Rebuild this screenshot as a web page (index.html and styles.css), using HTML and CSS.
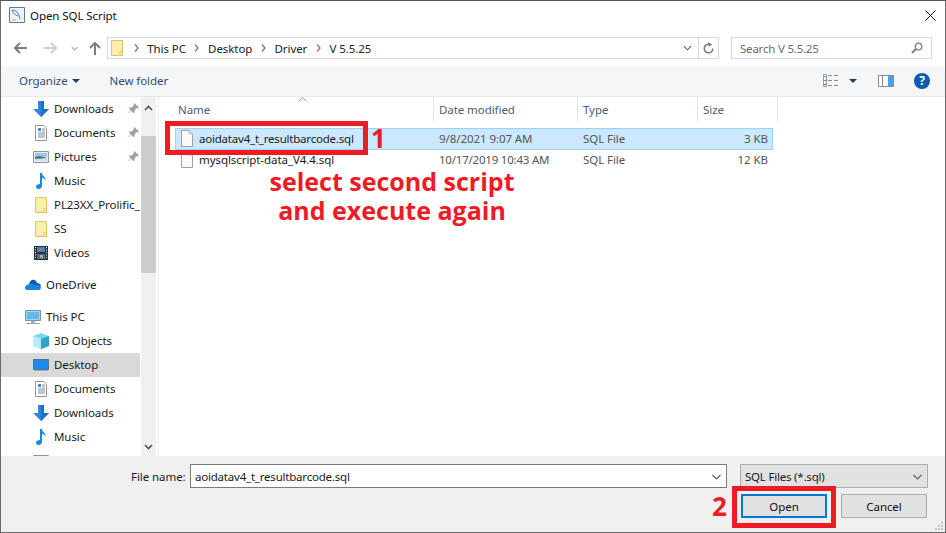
FILE: index.html
```html
<!DOCTYPE html>
<html lang="en">
<head>
<meta charset="utf-8">
<title>Open SQL Script</title>
<link rel="stylesheet" href="styles.css">
</head>
<body>
<svg class="defs" aria-hidden="true">
  <symbol id="i-folder" viewBox="0 0 16 16"><path d="M2.500.500h11v15h-11z" fill="#fde58f" stroke="#e6c25a"/><path d="M3 1h10v14H3z" fill="#ffeeb0"/><path d="M11 11.500h2.500v4H11z" fill="#fff3c4" stroke="#e6c25a"/></symbol>
  <symbol id="i-down" viewBox="0 0 16 16"><path d="M5 0h6v8h5l-8 8-8-8h5z" fill="#2f86e0"/><path d="M8 0h3v8h5l-8 8z" fill="#1c6fc9"/></symbol>
  <symbol id="i-docs" viewBox="0 0 16 16"><path d="M3 .5h8l2.500 2.500v12.500H2.500V.5z" fill="#fff" stroke="#8d9aa6"/><path d="M5 3h3v3H5z" fill="#3a8ede"/><path d="M9 4h3M9 6h3M5 8h7M5 10h7M5 12h7" stroke="#7c8a96"/></symbol>
  <symbol id="i-pics" viewBox="0 0 16 16"><path d="M.5 2.500h15v11H.5z" fill="#e4edf4" stroke="#8f979e"/><path d="M2 4h12v4H2z" fill="#9fc6e4"/><path d="M2 8l5-1 7 2v3H2z" fill="#4f7183"/><path d="M2 10l12-1v3H2z" fill="#cfe0ea"/></symbol>
  <symbol id="i-music" viewBox="0 0 16 16"><path d="M7 0h2c0 3 4 3.500 3.500 7.500C11.500 5.500 10 5 9 5v8c0 2-1.500 3-3.500 3S3 15 3 13.500 4.500 11 7 11z" fill="#1a86e8"/></symbol>
  <symbol id="i-video" viewBox="0 0 16 16"><path d="M1 1h14v14H1z" fill="#2b2f36"/><path d="M4 2h8v5H4z" fill="#3b82c4"/><path d="M4 9h8v5H4z" fill="#3671b6"/><path d="M6 3h3v3H6z" fill="#d9622c"/><path d="M7 10h3v3H7z" fill="#e0a030"/><path d="M2 2.500h1M2 5h1M2 7.500h1M2 10h1M2 12.500h1M13 2.500h1M13 5h1M13 7.500h1M13 10h1M13 12.500h1" stroke="#fff"/></symbol>
  <symbol id="i-cloud" viewBox="0 0 16 12"><path d="M4 5c.5-3 3-5 5.500-4 1.500.5 2 1.500 2.500 3 2 0 3.500 1 4 3H8z" fill="#0a5cb8"/><path d="M0 9c0-2 1.500-3.500 3.500-3.500C5 4 8 4 9 6c3-.5 6 0 7 2 0 2-1 3-2 3H2C1 11 0 10 0 9z" fill="#1c84dc"/></symbol>
  <symbol id="i-pc" viewBox="0 0 16 16"><path d="M.5 1.500h15v10H.5z" fill="#9fd4f6" stroke="#7f8f9c"/><path d="M2 3h12v7H2z" fill="#63b9ef"/><path d="M6 12h4v2H6z" fill="#a8b2ba"/><path d="M1 14.500h14" stroke="#9aa4ac"/></symbol>
  <symbol id="i-3d" viewBox="0 0 16 16"><path d="M8 0l8 3v10l-8 3-8-3V3z" fill="#7fd8ee"/><path d="M8 6l8-3v10l-8 3z" fill="#2da3c9"/><path d="M0 3l8 3v10l-8-3z" fill="#bdeaf5"/></symbol>
  <symbol id="i-desk" viewBox="0 0 16 16"><path d="M.5 2.500h15v10H.5z" fill="#1a8cf0" stroke="#5a6e80"/><path d="M1 13h14v1H1z" fill="#8fb8d8"/></symbol>
  <symbol id="i-pin" viewBox="0 0 12 12"><path d="M7 0l5 5-1.500 1-1-.5L7 8l.5 2L6 11 3.500 8.500 1 11l-.5-.5L3 8 1 6l1-1.500 2 .5 2.500-2.500L6 1.500z" fill="#9da0a3"/></symbol>
  <symbol id="i-file" viewBox="0 0 12 17"><path d="M.5.500h7.500l3.500 3.500v12.500H.5z" fill="#fafafa" stroke="#a0a0a0"/><path d="M8 .5V4h3.500" fill="none" stroke="#c0c0c0"/></symbol>
  <symbol id="i-chev" viewBox="0 0 10 6"><path d="M1 1l4 4 4-4" fill="none" stroke="#5f5f5f" stroke-width="1.200"/></symbol>
  <symbol id="i-crumb" viewBox="0 0 5 8"><path d="M1 .5L4 4 1 7.500" fill="none" stroke="#7a7a7a" stroke-width="1.300"/></symbol>
</svg>

<main class="window">
  <header class="titlebar">
    <svg class="app-icon" width="16" height="16" viewBox="0 0 16 16"><path d="M.5.500h15v15H.5z" fill="#eef3f7" stroke="#5d7c95"/><path d="M3 3c4 0 7 3 8 9M3 3c1 3 3 5 6 6" fill="none" stroke="#4f7f9f"/><path d="M3 13h4" stroke="#d9a441"/></svg>
    <span class="title">Open SQL Script</span>
    <svg class="close" width="11" height="11" viewBox="0 0 11 11"><path d="M.5.500l10 10M10.500.500l-10 10" stroke="#111" fill="none"/></svg>
  </header>

  <nav class="addressrow">
    <svg class="nav-back" width="13" height="12" viewBox="0 0 13 12"><path d="M6 1L1 6l5 5M1 6h12" fill="none" stroke="#7d7d7d" stroke-width="2"/></svg>
    <svg class="nav-fwd" width="13" height="12" viewBox="0 0 13 12"><path d="M7 1l5 5-5 5M12 6H0" fill="none" stroke="#cfcfcf" stroke-width="2"/></svg>
    <svg class="nav-more" width="7" height="5"><use href="#i-chev"/></svg>
    <svg class="nav-up" width="12" height="13" viewBox="0 0 12 13"><path d="M1 6l5-5 5 5M6 1v12" fill="none" stroke="#7d7d7d" stroke-width="2"/></svg>
    <div class="addressbox">
      <svg width="16" height="16"><use href="#i-folder"/></svg>
      <svg class="crumb-sep" width="5" height="8"><use href="#i-crumb"/></svg>
      <span>This PC</span>
      <svg class="crumb-sep" width="5" height="8"><use href="#i-crumb"/></svg>
      <span>Desktop</span>
      <svg class="crumb-sep" width="5" height="8"><use href="#i-crumb"/></svg>
      <span>Driver</span>
      <svg class="crumb-sep" width="5" height="8"><use href="#i-crumb"/></svg>
      <span>V 5.5.25</span>
      <svg class="addr-chev" width="9" height="6"><use href="#i-chev"/></svg>
      <span class="addr-refresh">
        <svg width="11" height="12" viewBox="0 0 11 12"><path d="M7 2.500A4.300 4.300 0 1 0 9.800 6.500" fill="none" stroke="#7a7a7a" stroke-width="1.500"/><path d="M5 0l4 2.500L6 5z" fill="#7a7a7a"/></svg>
      </span>
    </div>
    <div class="searchbox">
      <span class="tight">Search V 5.5.25</span>
      <svg width="12" height="12" viewBox="0 0 12 12"><circle cx="7.500" cy="4.500" r="3.300" fill="none" stroke="#7d7d7d" stroke-width="1.300"/><path d="M5 7l-4 4" stroke="#7d7d7d" stroke-width="2"/></svg>
    </div>
  </nav>

  <div class="toolbar">
    <span class="tool">Organize</span>
    <span class="caret organize-caret"></span>
    <span class="tool newfolder">New folder</span>
    <svg class="view-icon" width="16" height="13" viewBox="0 0 16 13"><path d="M.5.500h3v12h-3z" fill="#fff" stroke="#9a9a9a"/><path d="M1 2.500h2" stroke="#5d8fc0"/><path d="M1 6.500h2" stroke="#5d8fc0"/><path d="M1 10.500h2" stroke="#c9433c"/><path d="M5 1.500h4M11 1.500h4M5 6.500h4M11 6.500h4M5 11.500h4M11 11.500h4" stroke="#8a8a8a"/></svg>
    <span class="caret view-caret"></span>
    <svg class="pane-icon" width="16" height="12" viewBox="0 0 16 12"><path d="M.5.500h15v11H.5z" fill="#fff" stroke="#7f8a93"/><path d="M10 1h5v10h-5z" fill="#4e9be6"/><path d="M4.500 1v10" stroke="#7f8a93"/></svg>
    <span class="help">?</span>
  </div>

  <div class="body">
    <aside class="sidebar">
      <ul class="tree">
        <li class="node"><svg class="ico" width="16" height="16"><use href="#i-down"/></svg><span class="label">Downloads</span><svg class="pin" width="11" height="11"><use href="#i-pin"/></svg></li>
        <li class="node"><svg class="ico" width="16" height="16"><use href="#i-docs"/></svg><span class="label">Documents</span><svg class="pin" width="11" height="11"><use href="#i-pin"/></svg></li>
        <li class="node"><svg class="ico" width="16" height="16"><use href="#i-pics"/></svg><span class="label">Pictures</span><svg class="pin" width="11" height="11"><use href="#i-pin"/></svg></li>
        <li class="node"><svg class="ico" width="16" height="16"><use href="#i-music"/></svg><span class="label">Music</span></li>
        <li class="node"><svg class="ico" width="16" height="16"><use href="#i-folder"/></svg><span class="label">PL23XX_Prolific_</span></li>
        <li class="node"><svg class="ico" width="16" height="16"><use href="#i-folder"/></svg><span class="label">SS</span></li>
        <li class="node"><svg class="ico" width="16" height="16"><use href="#i-video"/></svg><span class="label">Videos</span></li>
        <li class="node root group"><svg class="ico" width="16" height="12"><use href="#i-cloud"/></svg><span class="label">OneDrive</span></li>
        <li class="node root group"><svg class="ico" width="16" height="16"><use href="#i-pc"/></svg><span class="label">This PC</span></li>
        <li class="node"><svg class="ico" width="16" height="16"><use href="#i-3d"/></svg><span class="label">3D Objects</span></li>
        <li class="node current"><svg class="ico" width="16" height="16"><use href="#i-desk"/></svg><span class="label">Desktop</span></li>
        <li class="node"><svg class="ico" width="16" height="16"><use href="#i-docs"/></svg><span class="label">Documents</span></li>
        <li class="node"><svg class="ico" width="16" height="16"><use href="#i-down"/></svg><span class="label">Downloads</span></li>
        <li class="node"><svg class="ico" width="16" height="16"><use href="#i-music"/></svg><span class="label">Music</span></li>
        <li class="node"><svg class="ico" width="16" height="16"><use href="#i-pics"/></svg></li>
      </ul>
    </aside>
    <div class="scrollbar">
      <svg class="scroll-up" width="9" height="6" viewBox="0 0 9 6"><path d="M1 5l3.500-3.500L8 5" fill="none" stroke="#505050" stroke-width="1.600"/></svg>
      <div class="thumb"></div>
      <svg class="scroll-down" width="9" height="6" viewBox="0 0 9 6"><path d="M1 1l3.500 3.500L8 1" fill="none" stroke="#505050" stroke-width="1.600"/></svg>
    </div>
    <section class="files">
      <div class="columns">
        <div class="col col-name">Name</div>
        <div class="col col-date">Date modified</div>
        <div class="col col-type">Type</div>
        <div class="col col-size">Size</div>
        <svg class="sort" width="9" height="5" viewBox="0 0 9 5"><path d="M.5 4.500l4-4 4 4" fill="none" stroke="#9a9a9a"/></svg>
      </div>
      <div class="row selected">
        <div class="cell-name"><svg width="12" height="17"><use href="#i-file"/></svg><span class="tight">aoidatav4_t_resultbarcode.sql</span></div>
        <div class="cell-date">9/8/2021 9:07 AM</div>
        <div class="cell-type">SQL File</div>
        <div class="cell-size">3 KB</div>
      </div>
      <div class="row second">
        <div class="cell-name"><svg width="12" height="17"><use href="#i-file"/></svg><span>mysqlscript-data_V4.4.sql</span></div>
        <div class="cell-date tight">10/17/2019 10:43 AM</div>
        <div class="cell-type">SQL File</div>
        <div class="cell-size">12 KB</div>
      </div>
    </section>
  </div>

  <footer class="footer">
    <div class="footer-row">
      <span class="fname-label">File name:</span>
      <div class="fname-input"><span class="tight">aoidatav4_t_resultbarcode.sql</span><svg width="11" height="6"><use href="#i-chev"/></svg></div>
      <div class="filter"><span class="tight">SQL Files (*.sql)</span><svg width="11" height="6"><use href="#i-chev"/></svg></div>
    </div>
    <div class="footer-buttons">
      <button class="btn btn-primary" type="button">Open</button>
      <button class="btn" type="button">Cancel</button>
    </div>
    <svg class="grip" width="10" height="10" viewBox="0 0 10 10"><path d="M7 1h2v2H7zM4 4h2v2H4zM7 4h2v2H7zM1 7h2v2H1zM4 7h2v2H4zM7 7h2v2H7z" fill="#c4c4c4"/></svg>
  </footer>
</main>

<div class="mark mark-file"></div>
<div class="mark-num num-1">1</div>
<div class="note">select second script<br>and execute again</div>
<div class="mark mark-open"></div>
<div class="mark-num num-2">2</div>
</body>
</html>
```

FILE: styles.css
```css
* { box-sizing: border-box; }
html, body { margin: 0; padding: 0; }
body {
  width: 946px;
  height: 533px;
  overflow: hidden;
  position: relative;
  background: #fff;
  font-family: "Noto Sans", "Open Sans", sans-serif;
  font-size: 11.5px;
  letter-spacing: -0.07px;
  color: #1a1a1a;
}
.defs { display: none; }
svg { display: block; flex: none; }
.tight { letter-spacing: -0.21px; }

.window {
  width: 946px;
  height: 533px;
  display: flex;
  flex-direction: column;
  border: 1px solid #6b6b6b;
  border-top-color: #555;
  background: #fff;
}

.titlebar {
  height: 29px;
  flex: none;
  display: flex;
  align-items: center;
  padding: 0 9px 1px 8px;
}
.title { margin-left: 5px; color: #111; }
.close { margin-left: auto; }

.addressrow {
  height: 36px;
  flex: none;
  display: flex;
  align-items: flex-start;
  padding-top: 7px;
}
.nav-back { margin: 5px 0 0 13px; }
.nav-fwd { margin: 5px 0 0 17px; }
.nav-more { margin: 9px 0 0 14px; }
.nav-up { margin: 5px 0 0 11px; }
.addressbox, .searchbox {
  height: 22px;
  display: flex;
  align-items: center;
  border: 1px solid #d9d9d9;
  background: #fff;
}
.addressbox {
  width: 612px;
  margin-left: 6px;
  padding-left: 1px;
  gap: 8.6px;
  color: #222;
}
.addr-chev { margin-left: auto; }
.addr-refresh {
  width: 20px;
  height: 20px;
  margin-left: -3px;
  border-left: 1px solid #d9d9d9;
  display: flex;
  align-items: center;
  justify-content: center;
}
.searchbox {
  width: 201px;
  margin-left: 12px;
  padding: 0 8px;
  justify-content: space-between;
  color: #6d6d6d;
}

.toolbar {
  height: 31px;
  flex: none;
  display: flex;
  align-items: center;
  background: #f5f6f7;
  border-bottom: 1px solid #e8e8e8;
  padding-bottom: 1px;
}
.tool { color: #2f4f78; }
.toolbar > .tool:first-child { margin-left: 18px; }
.caret {
  width: 0;
  height: 0;
  border-left: 4px solid transparent;
  border-right: 4px solid transparent;
  border-top: 4px solid #1f3d66;
}
.organize-caret { margin-left: 4px; }
.newfolder { margin-left: 30px; }
.view-icon { margin-left: auto; }
.view-caret { margin-left: 10px; }
.pane-icon { margin-left: 21px; }
.help {
  width: 16px;
  height: 16px;
  margin: 0 15px 0 20px;
  border-radius: 50%;
  background: #0a5cad;
  color: #fff;
  font-weight: 700;
  font-size: 12px;
  line-height: 16px;
  text-align: center;
}

.body {
  flex: 1;
  min-height: 0;
  display: flex;
}
.sidebar {
  width: 139px;
  flex: none;
  overflow: hidden;
}
.tree { list-style: none; margin: 0; padding: 0; }
.node {
  height: 24px;
  display: flex;
  align-items: center;
  padding-left: 32px;
  padding-bottom: 1px;
  white-space: nowrap;
  color: #1a1a1a;
  position: relative;
}
.node .label { margin-left: 5px; }
.node.root { padding-left: 24px; }
.node.group { margin-top: 8px; }
.node.current { background: #d9d9d9; }
.pin { position: absolute; left: 127px; top: 6px; }

.scrollbar {
  width: 15px;
  margin-left: 1px;
  flex: none;
  background: #f0f0f0;
  display: flex;
  flex-direction: column;
  align-items: center;
}
.scroll-up { margin-top: 8px; }
.thumb { width: 100%; height: 137px; margin-top: 25px; background: #cdcdcd; }
.scroll-down { margin-top: auto; margin-bottom: 6px; }

.files {
  flex: 1;
  min-width: 0;
  margin-left: 2px;
  border-left: 1px solid #f0f0f0;
  padding-left: 16px;
}
.columns {
  height: 25px;
  display: flex;
  position: relative;
  color: #4c607a;
}
.col {
  height: 25px;
  line-height: 26px;
  padding-left: 5px;
  border-right: 1px solid #e5e5e5;
}
.col-name { width: 259px; padding-left: 3px; }
.col-date { width: 144px; }
.col-type { width: 120px; }
.col-size { width: 80px; }
.sort { position: absolute; left: 123px; top: 0; }

.row {
  width: 598px;
  display: flex;
  align-items: center;
  border: 1px solid transparent;
  color: #555;
}
.selected {
  margin-top: 6px;
  height: 22px;
  background: #cce8ff;
  border-color: #99d1ff;
  padding-bottom: 1px;
}
.second { height: 20px; padding-bottom: 1px; }
.cell-name {
  width: 257px;
  display: flex;
  align-items: center;
  gap: 6px;
  padding-left: 5px;
  color: #1a1a1a;
}
.cell-date { width: 144px; padding-left: 6px; }
.cell-type { width: 120px; padding-left: 6px; }
.cell-size { width: 75px; text-align: right; padding-right: 4px; }

.footer {
  height: 76px;
  flex: none;
  background: #f0f0f0;
  position: relative;
}
.footer-row {
  display: flex;
  align-items: center;
  padding: 8px 0 0 130px;
}
.fname-label { width: 59px; color: #1a1a1a; }
.fname-input, .filter {
  height: 24px;
  display: flex;
  align-items: center;
  justify-content: space-between;
  padding: 1px 4px 0;
}
.fname-input {
  width: 537px;
  background: #fff;
  border: 1px solid #7a7a7a;
}
.filter {
  width: 188px;
  margin-left: 13px;
  background: #e1e1e1;
  border: 1px solid #adadad;
}
.footer-buttons {
  display: flex;
  justify-content: flex-end;
  gap: 14px;
  padding: 6px 18px 0 0;
}
.btn {
  width: 86px;
  height: 24px;
  padding: 0;
  background: #e1e1e1;
  border: 1px solid #adadad;
  font: inherit;
  letter-spacing: inherit;
  color: #111;
}
.btn-primary { border: 2px solid #0078d7; }
.grip { position: absolute; right: 1px; bottom: 1px; }

.mark {
  position: absolute;
  border: 5px solid #ed1c24;
}
.mark-file { left: 165px; top: 121px; width: 203px; height: 34px; }
.mark-open { left: 732px; top: 486px; width: 104px; height: 42px; }
.mark-num, .note {
  position: absolute;
  color: #ed1c24;
  font-family: "Open Sans", "Noto Sans", sans-serif;
  font-weight: 700;
  letter-spacing: 0;
}
.mark-num { font-size: 26px; line-height: 30px; }
.num-1 { left: 371px; top: 123px; }
.num-2 { left: 712px; top: 491px; }
.note {
  left: 242px;
  top: 167px;
  width: 300px;
  text-align: center;
  font-size: 25px;
  line-height: 29px;
  white-space: nowrap;
}
```
